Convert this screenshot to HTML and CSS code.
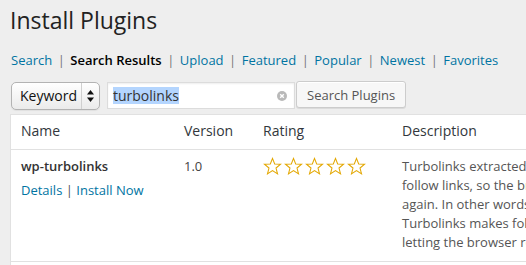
FILE: index.html
```html
<!DOCTYPE html>
<html lang="en">
<head>
  <meta charset="UTF-8" />
  <title>Install Plugins</title>
  <link rel="stylesheet" href="styles.css">
</head>
<body>
  <div class="wrap">
    <h1>Install Plugins</h1>

    <ul class="subnav">
      <li><a href="#">Search</a><span class="sep">|</span></li>
      <li><span class="current">Search Results</span><span class="sep">|</span></li>
      <li><a href="#">Upload</a><span class="sep">|</span></li>
      <li><a href="#">Featured</a><span class="sep">|</span></li>
      <li><a href="#">Popular</a><span class="sep">|</span></li>
      <li><a href="#">Newest</a><span class="sep">|</span></li>
      <li><a href="#">Favorites</a></li>
    </ul>

    <div class="search-row">
      <div class="select">
        <span class="select-label">Keyword</span>
        <span class="select-arrows">
          <svg width="7" height="12" viewBox="0 0 7 12">
            <polygon points="3.5,0 7,4.5 0,4.5" fill="#111" />
            <polygon points="0,7.5 7,7.5 3.5,12" fill="#111" />
          </svg>
        </span>
      </div>
      <div class="search-box">
        <span class="search-text"><span class="selected">turbolinks</span></span>
        <span class="clear-btn">
          <svg width="10" height="10" viewBox="0 0 10 10">
            <circle cx="5" cy="5" r="5" fill="#b9b9b9" />
            <path d="M3.2 3.2 L6.8 6.8 M6.8 3.2 L3.2 6.8" stroke="#fff" stroke-width="1.4" />
          </svg>
        </span>
      </div>
      <button class="search-btn">Search Plugins</button>
    </div>

    <div class="plugin-list">
      <table>
        <colgroup>
          <col class="col-name">
          <col class="col-version">
          <col class="col-rating">
          <col>
        </colgroup>
        <thead>
          <tr>
            <th>Name</th>
            <th>Version</th>
            <th>Rating</th>
            <th>Description</th>
          </tr>
        </thead>
        <tbody>
          <tr>
            <td>
              <div class="plugin-name">wp-turbolinks</div>
              <div class="actions"><a href="#">Details</a> <span class="bar">|</span> <a href="#">Install Now</a></div>
            </td>
            <td>1.0</td>
            <td>
              <div class="stars">
                <svg class="star" viewBox="0 0 20 20"><polygon points="10,1.5 12.3,7.3 18.5,7.6 13.7,11.6 15.3,17.7 10,14.3 4.7,17.7 6.3,11.6 1.5,7.6 7.7,7.3" /></svg>
                <svg class="star" viewBox="0 0 20 20"><polygon points="10,1.5 12.3,7.3 18.5,7.6 13.7,11.6 15.3,17.7 10,14.3 4.7,17.7 6.3,11.6 1.5,7.6 7.7,7.3" /></svg>
                <svg class="star" viewBox="0 0 20 20"><polygon points="10,1.5 12.3,7.3 18.5,7.6 13.7,11.6 15.3,17.7 10,14.3 4.7,17.7 6.3,11.6 1.5,7.6 7.7,7.3" /></svg>
                <svg class="star" viewBox="0 0 20 20"><polygon points="10,1.5 12.3,7.3 18.5,7.6 13.7,11.6 15.3,17.7 10,14.3 4.7,17.7 6.3,11.6 1.5,7.6 7.7,7.3" /></svg>
                <svg class="star" viewBox="0 0 20 20"><polygon points="10,1.5 12.3,7.3 18.5,7.6 13.7,11.6 15.3,17.7 10,14.3 4.7,17.7 6.3,11.6 1.5,7.6 7.7,7.3" /></svg>
              </div>
            </td>
            <td class="desc">
              Turbolinks extracted from Rails 4. It uses pushState to<br>
              follow links, so the browser never has to load CSS<br>
              again. In other words, only the body gets replaced.<br>
              Turbolinks makes following links faster by not<br>
              letting the browser recompile the JavaScript and CSS.
            </td>
          </tr>
        </tbody>
      </table>
    </div>
  </div>
</body>
</html>
```

FILE: styles.css
```css
body {
  margin: 0;
  background: #eeeeee;
  font-family: "Open Sans", sans-serif;
  color: #444;
  overflow: hidden;
}

a {
  color: #0074a2;
  text-decoration: none;
}

.wrap {
  padding: 6px 0 0 10px;
}

h1 {
  margin: 0;
  font-size: 23px;
  font-weight: 400;
  line-height: 29px;
  color: #222;
}

.subnav {
  display: flex;
  list-style: none;
  margin: 16px 0 0 1px;
  padding: 0;
  font-size: 13px;
  line-height: 18px;
}

.subnav .current {
  color: #000;
  font-weight: 600;
}

.subnav .sep {
  color: #777;
  margin: 0 5.5px;
}

/* search controls */
.search-row {
  display: flex;
  align-items: flex-start;
  margin: 12px 0 0 1px;
}

.select {
  display: flex;
  width: 89px;
  height: 28px;
  margin-top: 1px;
  box-sizing: border-box;
  border: 1px solid #b3b3b3;
  border-radius: 5px;
  background: linear-gradient(#ffffff, #ebebeb);
  box-shadow: 0 1px 1px rgba(0, 0, 0, 0.06);
}

.select-label {
  flex: 1;
  padding-left: 8px;
  font-size: 14px;
  line-height: 26px;
  color: #111;
}

.select-arrows {
  width: 17px;
  border-left: 1px solid #d0d0d0;
  display: flex;
  align-items: center;
  justify-content: center;
}

.search-box {
  display: flex;
  align-items: center;
  justify-content: space-between;
  width: 188px;
  height: 27px;
  margin: 1px 0 0 7px;
  box-sizing: border-box;
  padding: 0 7px 0 5px;
  background: #fff;
  border: 1px solid #dcdcdc;
  box-shadow: inset 0 1px 2px rgba(0, 0, 0, 0.07);
}

.search-text {
  font-size: 14px;
  color: #333;
}

.search-text .selected {
  background: #b4d5fe;
  line-height: 17px;
  display: inline-block;
}

.clear-btn {
  display: flex;
}

.search-btn {
  height: 27px;
  margin-left: 1px;
  padding: 0 10px;
  font-family: "Open Sans", sans-serif;
  font-size: 13px;
  color: #555;
  background: #f7f7f7;
  border: 1px solid #cccccc;
  border-radius: 3px;
  box-shadow: inset 0 1px 0 #fff, 0 1px 0 rgba(0, 0, 0, 0.08);
}

/* plugin table */
.plugin-list {
  width: 700px;
  margin-top: 4px;
  padding-bottom: 30px;
  background: #fff;
  border: 1px solid #e1e1e1;
  border-right: 0;
}

table {
  width: 100%;
  border-collapse: collapse;
  table-layout: fixed;
}

.col-name { width: 163px; }
.col-version { width: 79px; }
.col-rating { width: 139px; }

th {
  text-align: left;
  font-weight: 400;
  font-size: 14px;
  line-height: 20px;
  color: #32373c;
  padding: 6px 10px 8px;
  border-bottom: 1px solid #e1e1e1;
}

td {
  vertical-align: top;
  font-size: 13px;
  line-height: 19px;
  color: #444;
  padding: 7px 10px 9px;
  border-bottom: 1px solid #e1e1e1;
}

.plugin-name {
  font-weight: 600;
  color: #333;
}

.actions {
  margin-top: 5px;
}

.actions .bar {
  color: #555;
}

.stars {
  display: flex;
  gap: 2px;
}

.star {
  width: 19px;
  height: 19px;
  fill: none;
  stroke: #e3a700;
  stroke-width: 1.1;
  stroke-linejoin: miter;
}

.desc {
  color: #555;
  white-space: nowrap;
}
```
